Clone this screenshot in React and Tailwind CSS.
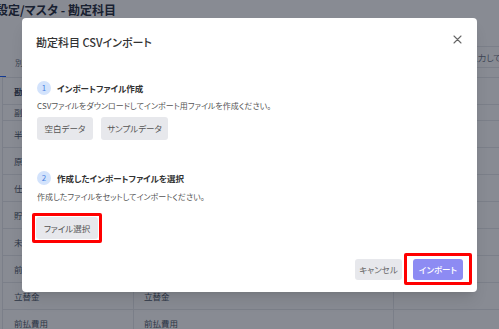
import React from "react"

const font = "font-['Noto_Sans_CJK_JP','Noto_Sans',sans-serif] [font-feature-settings:'palt']"

const rows = [
  { name: "副資材", label: "副資材", h: "h-[16px]" },
  { name: "半製品", label: "半製品", h: "h-[27px]" },
  { name: "原材料", label: "原材料", h: "h-[27px]" },
  { name: "仕掛品", label: "仕掛品", h: "h-[27px]" },
  { name: "貯蔵品", label: "貯蔵品", h: "h-[27px]" },
  { name: "未着品", label: "未着品", h: "h-[27px]" },
  { name: "前渡金", label: "前渡金", h: "h-[27px]" },
  { name: "立替金", label: "立替金", h: "h-[27px]" },
  { name: "前払費用", label: "前払費用", h: "h-[27px]" },
]

const CloseIcon = () => (
  <svg width="9" height="9" viewBox="0 0 9 9" className="text-[#666] mb-[6px]">
    <path d="M1 1L8 8M8 1L1 8" stroke="currentColor" strokeWidth="1.1" strokeLinecap="round" />
  </svg>
)

const StepTitle = ({ num, children }) => (
  <div className="flex items-center">
    <div className="w-[14px] h-[14px] rounded-full bg-[#d3e3fc] text-[#4b82e0] text-[8px] flex items-center justify-center leading-none">
      {num}
    </div>
    <span className="ml-[6px] text-[8.5px] font-bold text-[#333] leading-none">{children}</span>
  </div>
)

const GrayButton = ({ children, className = "" }) => (
  <button className={`bg-[#e7e8ec] text-[#555] text-[8.5px] rounded-[3px] flex items-center justify-center ${className}`}>
    {children}
  </button>
)

const Background = () => (
  <div className="w-full h-full bg-white">
    {/* Page title */}
    <div className="h-[20px] flex items-center">
      <h1 className="ml-[-4px] text-[12px] font-bold text-gray-800 leading-none">設定/マスタ - 勘定科目</h1>
    </div>

    {/* Tabs + search */}
    <div className="h-[57px] relative flex">
      <div className="pl-[15px] pt-[38px] text-[8.5px] text-gray-500 leading-none">別名</div>
      <div className="ml-auto mt-[26px] w-[80px] h-[22px] border border-gray-200 rounded-l-[3px] border-r-0 flex items-center pl-[16px] text-[8.5px] text-gray-500 whitespace-nowrap overflow-hidden">
        科目名を入力してください
      </div>
      <div className="absolute left-0 bottom-0 w-[6px] h-[1.5px] bg-blue-600" />
    </div>

    {/* Table */}
    <div className="border-t border-gray-200 ml-[2px] border-l text-[8.5px] text-gray-600">
      <div className="h-[27px] flex border-b border-gray-200 font-bold text-gray-700">
        <div className="w-[131px] border-r border-gray-200 flex items-center pl-[11px]">勘定科目名</div>
        <div className="w-[260px] border-r border-gray-200 flex items-center pl-[10px]">表示名</div>
        <div className="flex-1" />
      </div>
      {rows.map((r, i) => (
        <div key={i} className={`${r.h} flex border-b border-gray-200 overflow-hidden`}>
          <div className="w-[131px] border-r border-gray-200 flex items-center pl-[11px]">{r.name}</div>
          <div className="w-[260px] border-r border-gray-200 flex items-center pl-[10px]">{r.label}</div>
          <div className="flex-1" />
        </div>
      ))}
    </div>
  </div>
)

const ImportModal = () => (
  <div className="absolute left-[22px] top-[18px] w-[455px] h-[274px] bg-white rounded-[4px] shadow-lg flex flex-col">
    <div className="h-[48px] flex items-center justify-between pl-[14px] pr-[15px]">
      <h2 className="text-[11px] font-medium text-[#333] leading-none">勘定科目 CSVインポート</h2>
      <CloseIcon />
    </div>

    <div className="px-[15px] pt-[15px]">
      <StepTitle num="1">インポートファイル作成</StepTitle>
      <p className="mt-[5px] text-[8px] text-[#555] leading-[12px]">
        CSVファイルをダウンロードしてインポート用ファイルを作成ください。
      </p>
      <div className="mt-[5px] flex gap-[8px]">
        <GrayButton className="w-[56px] h-[23px]">空白データ</GrayButton>
        <GrayButton className="w-[67px] h-[23px]">サンプルデータ</GrayButton>
      </div>

      <div className="mt-[31px]">
        <StepTitle num="2">作成したインポートファイルを選択</StepTitle>
      </div>
      <p className="mt-[6px] text-[8px] text-[#555] leading-[12px]">
        作成したファイルをセットしてインポートください。
      </p>
      <div className="mt-[10px] ml-[-5px] w-[70px] h-[30px] border-[3px] border-[#ff0000] rounded-[2px] p-[1px]">
        <GrayButton className="w-full h-full">ファイル選択</GrayButton>
      </div>
    </div>

    <div className="mt-auto pb-[7px] pr-[5px] flex items-center justify-end gap-[2px]">
      <GrayButton className="w-[47px] h-[21px] text-[#666]">キャンセル</GrayButton>
      <div className="w-[68px] h-[32px] border-[3px] border-[#ff0000] rounded-[2px] flex items-center justify-center">
        <button className="w-[50px] h-[21px] rounded-[3px] bg-[#8d8bf3] text-white text-[8.5px] font-medium">
          インポート
        </button>
      </div>
    </div>
  </div>
)

export default function App() {
  return (
    <div className={`relative w-[499px] h-[329px] overflow-hidden ${font}`}>
      <Background />
      <div className="absolute inset-0 bg-[#111827]/50" />
      <ImportModal />
    </div>
  )
}
